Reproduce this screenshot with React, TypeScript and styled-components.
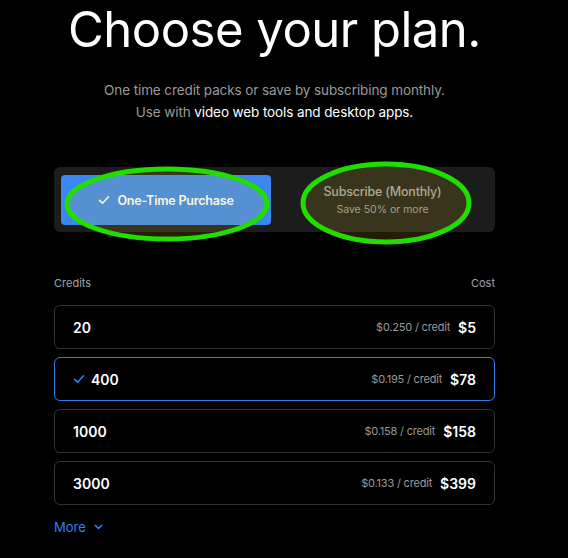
import React, { useState } from "react";
import styled, { createGlobalStyle } from "styled-components";

const GlobalStyle = createGlobalStyle`
  html, body {
    margin: 0;
    padding: 0;
    background: #000;
  }
  body {
    font-family: Inter, "Noto Sans", sans-serif;
    color: #fff;
  }
`;

const Page = styled.div`
  width: 441px;
  margin-left: 54px;
  padding-top: 5px;
  display: flex;
  flex-direction: column;
`;

const Title = styled.h1`
  margin: 0;
  font-size: 49px;
  line-height: 1;
  font-weight: 400;
  letter-spacing: -0.5px;
  text-align: center;
  white-space: nowrap;
`;

const Lead = styled.p`
  margin: 25px 0 0;
  font-size: 13.5px;
  line-height: 22px;
  color: #9a9a9a;
  text-align: center;
  letter-spacing: -0.1px;
`;

const Strong = styled.span`
  color: #fff;
`;

const ToggleWrap = styled.div`
  position: relative;
  margin-top: 44px;
`;

const Toggle = styled.div`
  display: grid;
  grid-template-columns: 210px 1fr;
  gap: 6px;
  padding: 8px 7px 7px;
  background: #1c1c1c;
  border-radius: 6px;
`;

const ToggleButton = styled.button<{ $active?: boolean }>`
  height: 50px;
  border: 0;
  border-radius: 4px;
  background: ${(p) => (p.$active ? "#3b86f0" : "transparent")};
  color: ${(p) => (p.$active ? "#fff" : "#a3a3a3")};
  font-family: inherit;
  display: flex;
  flex-direction: column;
  align-items: center;
  justify-content: center;
  gap: 4px;
  cursor: pointer;
  padding: 0;
`;

const ButtonLabel = styled.span<{ $bold?: boolean }>`
  display: flex;
  align-items: center;
  gap: 7px;
  font-size: 12.5px;
  font-weight: ${(p) => (p.$bold ? 600 : 500)};
  letter-spacing: -0.2px;
`;

const ButtonSub = styled.span`
  font-size: 10.5px;
  color: #9a9a9a;
`;

const Marks = styled.svg`
  position: absolute;
  left: 0;
  top: 0;
  overflow: visible;
  pointer-events: none;
`;

const HeadRow = styled.div`
  display: flex;
  justify-content: space-between;
  margin-top: 44px;
  font-size: 11px;
  color: #a3a3a3;
`;

const List = styled.div`
  display: flex;
  flex-direction: column;
  gap: 8px;
  margin-top: 15px;
`;

const Row = styled.div<{ $selected?: boolean }>`
  height: 44px;
  box-sizing: border-box;
  display: flex;
  align-items: center;
  padding: 0 18px;
  border: 1px solid ${(p) => (p.$selected ? "#2f7fe8" : "#333")};
  border-radius: 6px;
  cursor: pointer;
`;

const Amount = styled.span`
  display: flex;
  align-items: center;
  gap: 6px;
  font-size: 14px;
  font-weight: 600;
  flex: 1;
`;

const PerCredit = styled.span`
  font-size: 11px;
  color: #9a9a9a;
  margin-right: 8px;
  letter-spacing: -0.2px;
`;

const Price = styled.span`
  font-size: 14px;
  font-weight: 600;
`;

const More = styled.button`
  align-self: flex-start;
  margin-top: 14px;
  padding: 0;
  border: 0;
  background: none;
  color: #2f80f5;
  font-family: inherit;
  font-size: 13px;
  display: flex;
  align-items: center;
  gap: 8px;
  cursor: pointer;
`;

const Check = ({ color, size = 12 }: { color: string; size?: number }) => (
  <svg width={size} height={size} viewBox="0 0 12 12" fill="none">
    <path d="M1.5 6.3 L4.6 9.2 L10.5 2.8" stroke={color} strokeWidth="1.6" strokeLinecap="round" strokeLinejoin="round" />
  </svg>
);

const packs = [
  { credits: "20", per: "$0.250", price: "$5" },
  { credits: "400", per: "$0.195", price: "$78" },
  { credits: "1000", per: "$0.158", price: "$158" },
  { credits: "3000", per: "$0.133", price: "$399" },
];

export default function App() {
  const [selected, setSelected] = useState(1);

  return (
    <>
      <GlobalStyle />
      <Page>
        <Title>Choose your plan.</Title>
        <Lead>
          One time credit packs or save by subscribing monthly.
          <br />
          Use with <Strong>video web tools and desktop apps.</Strong>
        </Lead>

        <ToggleWrap>
          <Toggle>
            <ToggleButton $active>
              <ButtonLabel $bold>
                <Check color="#fff" />
                One-Time Purchase
              </ButtonLabel>
            </ToggleButton>
            <ToggleButton>
              <ButtonLabel>Subscribe (Monthly)</ButtonLabel>
              <ButtonSub>Save 50% or more</ButtonSub>
            </ToggleButton>
          </Toggle>
          <Marks width="441" height="65">
            <ellipse cx="113" cy="37" rx="100" ry="35" fill="rgba(228,200,40,0.15)" stroke="#22dd00" strokeWidth="5" />
            <ellipse cx="332" cy="36" rx="83" ry="39" fill="rgba(228,200,40,0.15)" stroke="#22dd00" strokeWidth="5" />
          </Marks>
        </ToggleWrap>

        <HeadRow>
          <span>Credits</span>
          <span>Cost</span>
        </HeadRow>

        <List>
          {packs.map((p, i) => (
            <Row key={p.credits} $selected={i === selected} onClick={() => setSelected(i)}>
              <Amount>
                {i === selected && <Check color="#2f80f5" size={12} />}
                {p.credits}
              </Amount>
              <PerCredit>{p.per} / credit</PerCredit>
              <Price>{p.price}</Price>
            </Row>
          ))}
        </List>

        <More>
          More
          <svg width="9" height="6" viewBox="0 0 9 6" fill="none">
            <path d="M1.2 1.2 L4.5 4.5 L7.8 1.2" stroke="#2f80f5" strokeWidth="1.5" strokeLinecap="round" strokeLinejoin="round" />
          </svg>
        </More>
      </Page>
    </>
  );
}
